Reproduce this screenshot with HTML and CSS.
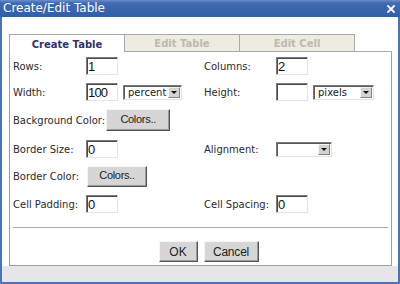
FILE: index.html
```html
<!DOCTYPE html>
<html>
<head>
<meta charset="utf-8">
<link rel="stylesheet" href="styles.css">
</head>
<body>
<div class="dialog">
  <div class="titlebar">
    <span class="title">Create/Edit Table</span>
    <svg class="close" width="8" height="8" viewBox="0 0 8 8"><path d="M1 1L7 7M7 1L1 7" stroke="#fff" stroke-width="1.8" stroke-linecap="square"/></svg>
  </div>
  <div class="body">
    <div class="tabs">
      <div class="tab active">Create Table</div>
      <div class="tab">Edit Table</div>
      <div class="tab">Edit Cell</div>
      <div class="tab-fill"></div>
    </div>
    <div class="panel">
      <div class="row h26">
        <span class="label">Rows:</span>
        <div class="field"><input class="input" type="text" value="1"></div>
        <span class="label">Columns:</span>
        <div class="field"><input class="input" type="text" value="2"></div>
      </div>
      <div class="row h26">
        <span class="label">Width:</span>
        <div class="field">
          <input class="input" type="text" value="100">
          <div class="select w59"><span class="sel-text">percent</span><span class="arrow"><i></i></span></div>
        </div>
        <span class="label">Height:</span>
        <div class="field">
          <input class="input" type="text" value="">
          <div class="select w61"><span class="sel-text">pixels</span><span class="arrow"><i></i></span></div>
        </div>
      </div>
      <div class="row-wide h30">
        <span class="label">Background Color:</span>
        <button class="btn colors1">Colors..</button>
      </div>
      <div class="row h28">
        <span class="label">Border Size:</span>
        <div class="field"><input class="input" type="text" value="0"></div>
        <span class="label">Alignment:</span>
        <div class="field">
          <div class="select w56"><span class="sel-text"></span><span class="arrow"><i></i></span></div>
        </div>
      </div>
      <div class="row h26">
        <span class="label">Border Color:</span>
        <div class="field"><button class="btn colors2">Colors..</button></div>
      </div>
      <div class="row h30">
        <span class="label">Cell Padding:</span>
        <div class="field"><input class="input" type="text" value="0"></div>
        <span class="label">Cell Spacing:</span>
        <div class="field"><input class="input" type="text" value="0"></div>
      </div>
      <div class="sep"></div>
      <div class="actions">
        <button class="btn ok">OK</button>
        <button class="btn cancel">Cancel</button>
      </div>
    </div>
    <div class="footer"></div>
  </div>
</div>
</body>
</html>
```

FILE: styles.css
```css
html, body {
  margin: 0;
  padding: 0;
  background: #ffffff;
}

.dialog {
  width: 400px;
  height: 284px;
  box-sizing: border-box;
  border: 2px solid #4a74b8;
  border-top: none;
  display: flex;
  flex-direction: column;
  background: #ffffff;
  font-family: "DejaVu Sans", Verdana, sans-serif;
}

.titlebar {
  height: 17px;
  margin: 0 -2px;
  padding: 0 5px 0 3px;
  display: flex;
  align-items: center;
  justify-content: space-between;
  background: linear-gradient(to bottom, #6a8fcf 0, #3f6bb3 3px, #315ea8 100%);
}

.title {
  color: #ffffff;
  font-size: 12px;
  line-height: 17px;
}

.close {
  display: block;
}

.body {
  flex: 1;
  display: flex;
  flex-direction: column;
  padding-top: 17px;
  background: #ffffff;
}

.tabs {
  display: flex;
  margin-left: 7px;
  width: 383px;
  height: 18px;
}

.tab {
  box-sizing: border-box;
  width: 115px;
  height: 18px;
  border-top: 1px solid #a9a9a9;
  border-right: 1px solid #a9a9a9;
  border-bottom: 1px solid #a9a9a9;
  background: #eeebe1;
  color: #bcb9b1;
  font-size: 10px;
  font-weight: bold;
  display: flex;
  align-items: center;
  justify-content: center;
}

.tab.active {
  width: 116px;
  border-left: 1px solid #a9a9a9;
  border-bottom: none;
  background: #ffffff;
  color: #33336b;
  padding-top: 1px;
}

.tab-fill {
  flex: 1;
  border-bottom: 1px solid #a9a9a9;
}

.panel {
  margin-left: 7px;
  width: 383px;
  box-sizing: border-box;
  border: 1px solid #a0a0a0;
  border-top: none;
  padding: 1px 3px 3px 3px;
  background: #ffffff;
}

.row {
  display: grid;
  grid-template-columns: 73px 118px 72px 1fr;
  align-items: center;
}

.row-wide {
  display: flex;
  align-items: center;
  gap: 1px;
}

.h26 { height: 26px; }
.h28 { height: 28px; }
.h30 { height: 30px; }

.label {
  font-size: 10px;
  color: #2b2b2b;
  white-space: nowrap;
}

.field {
  display: flex;
  align-items: center;
  gap: 5px;
}

.input {
  box-sizing: border-box;
  width: 32px;
  height: 18px;
  margin: 0;
  padding: 0 0 0 1px;
  border: 1px solid;
  border-color: #7c7c7c #e4e4e4 #e4e4e4 #7c7c7c;
  box-shadow: inset 1px 1px 0 #4a4a4a;
  background: #ffffff;
  font-family: "Liberation Sans", Arial, sans-serif;
  font-size: 13px;
  letter-spacing: -0.8px;
  color: #111111;
  outline: none;
}

.select {
  box-sizing: border-box;
  height: 15px;
  display: flex;
  align-items: stretch;
  border: 1px solid;
  border-color: #7c7c7c #e4e4e4 #e4e4e4 #7c7c7c;
  box-shadow: inset 1px 1px 0 #5a5a5a;
  background: #ffffff;
  padding: 1px 1px 1px 1px;
}

.w59 { width: 59px; }
.w61 { width: 61px; }
.w56 { width: 56px; }

.sel-text {
  flex: 1;
  padding-left: 3px;
  font-size: 10px;
  line-height: 12px;
  color: #222222;
}

.arrow {
  box-sizing: border-box;
  width: 12px;
  border: 1px solid;
  border-color: #f4f4f4 #808080 #808080 #f4f4f4;
  background: #d6d3cc;
  display: flex;
  align-items: center;
  justify-content: center;
}

.arrow i {
  display: block;
  width: 0;
  height: 0;
  border-left: 3px solid transparent;
  border-right: 3px solid transparent;
  border-top: 3px solid #111111;
}

.btn {
  box-sizing: border-box;
  margin: 0;
  padding: 0;
  border: 1px solid;
  border-color: #f6f6f6 #555555 #555555 #f6f6f6;
  box-shadow: inset -1px -1px 0 #9a9a9a;
  background: #d6d6d6;
  color: #222222;
  font-family: "Liberation Sans", Arial, sans-serif;
}

.colors1 {
  width: 64px;
  height: 22px;
  font-size: 11px;
  letter-spacing: -0.3px;
  padding-bottom: 3px;
}

.colors2 {
  width: 60px;
  height: 21px;
  font-size: 11px;
  letter-spacing: -0.3px;
  margin-left: 1px;
  padding-bottom: 3px;
}

.sep {
  margin-top: 8px;
  border-top: 1px solid #a8a8a8;
}

.actions {
  margin-top: 13px;
  height: 21px;
  display: flex;
  justify-content: center;
  gap: 6px;
  padding-left: 16px;
}

.ok {
  width: 39px;
  height: 21px;
  font-size: 12px;
}

.cancel {
  width: 55px;
  height: 21px;
  font-size: 12px;
  letter-spacing: -0.2px;
}

.footer {
  flex: 1;
  background: #e6e6ea;
}
```
